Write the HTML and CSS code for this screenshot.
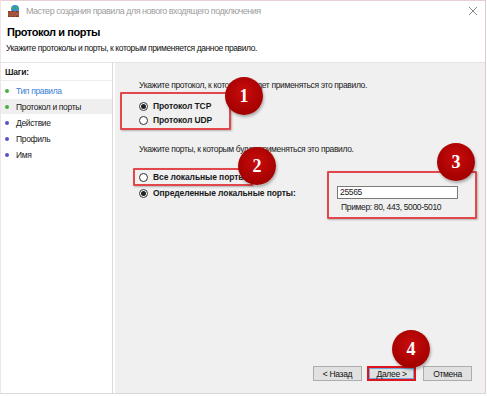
FILE: index.html
```html
<!DOCTYPE html>
<html lang="ru">
<head>
  <meta charset="UTF-8">
  <title>Мастер создания правила для нового входящего подключения</title>
  <link rel="stylesheet" href="styles.css">
</head>
<body>
  <div class="window">
    <div class="titlebar">
      <svg class="app-icon" width="14" height="14" viewBox="0 0 14 14">
        <circle cx="8" cy="5" r="4" fill="#2f8fd8"/>
        <path d="M5 3 Q7 2 8 4 Q7 6 5 5 Z M9 2 Q11 3 11 5 Q10 6 9 4 Z" fill="#4caf3a"/>
        <rect x="1" y="7" width="11" height="6" fill="#8b3a22"/>
        <path d="M1 9 H12 M1 11 H12 M4 7 V9 M8 7 V9 M6 9 V11 M10 9 V11 M4 11 V13 M8 11 V13" stroke="#c9826a" stroke-width="0.6"/>
      </svg>
      <span class="title">Мастер создания правила для нового входящего подключения</span>
      <svg class="close" width="10" height="10" viewBox="0 0 10 10">
        <path d="M1 1 L9 9 M9 1 L1 9" stroke="#8a8a8a" stroke-width="1"/>
      </svg>
    </div>

    <div class="header">
      <h1>Протокол и порты</h1>
      <p>Укажите протоколы и порты, к которым применяется данное правило.</p>
    </div>

    <div class="body">
      <div class="steps">
        <div class="steps-title">Шаги:</div>
        <div class="step step-done"><span class="dot dot-green"></span>Тип правила</div>
        <div class="step step-current"><span class="dot dot-green"></span>Протокол и порты</div>
        <div class="step"><span class="dot"></span>Действие</div>
        <div class="step"><span class="dot"></span>Профиль</div>
        <div class="step"><span class="dot"></span>Имя</div>
      </div>

      <div class="main">
        <div class="content">
          <p class="prompt">Укажите протокол, к которому будет применяться это правило.</p>
          <div class="mark-box box-protocol">
            <label class="radio-row"><span class="radio checked"></span>Протокол TCP</label>
            <label class="radio-row"><span class="radio"></span>Протокол UDP</label>
          </div>

          <p class="prompt prompt-ports">Укажите порты, к которым будет применяться это правило.</p>
          <div class="ports">
            <div class="port-options">
              <div class="mark-box box-all">
                <label class="radio-row"><span class="radio"></span>Все локальные порты</label>
              </div>
              <label class="radio-row row-specific"><span class="radio checked"></span>Определенные локальные порты:</label>
            </div>
            <div class="mark-box box-ports">
              <div class="port-input">25565</div>
              <div class="hint">Пример: 80, 443, 5000-5010</div>
            </div>
          </div>
        </div>

        <div class="buttons">
          <button class="btn">&lt; Назад</button>
          <button class="btn btn-next">Далее &gt;</button>
          <button class="btn btn-cancel">Отмена</button>
        </div>
      </div>
    </div>

    <span class="badge badge-1">1</span>
    <span class="badge badge-2">2</span>
    <span class="badge badge-3">3</span>
    <span class="badge badge-4">4</span>
  </div>
</body>
</html>
```

FILE: styles.css
```css
body {
  margin: 0;
  background: #ffffff;
  font-family: 'Liberation Sans', Arial, sans-serif;
  font-size: 8.5px;
  letter-spacing: -0.35px;
  color: #1a1a1a;
}
.window {
  position: relative;
  width: 486px;
  height: 394px;
  border-top: 1px solid #e8cfd6;
  border-right: 1px solid #e2c7cf;
  border-left: 1px solid #f1e4e8;
  box-sizing: border-box;
  border-bottom: 1px solid #d9d9d9;
  display: flex;
  flex-direction: column;
  background: #ffffff;
  overflow: hidden;
}
.titlebar {
  height: 19px;
  display: flex;
  align-items: center;
  padding-left: 6px;
  padding-right: 6px;
}
.app-icon {
  margin-right: 5px;
}
.title {
  flex: 1;
  color: #a0a0a0;
  font-size: 9px;
  letter-spacing: -0.5px;
}
.close {
  margin-right: 1px;
}
.header {
  height: 42px;
  padding-left: 6px;
}
.header h1 {
  margin: 6px 0 0;
  font-size: 11px;
  letter-spacing: -0.4px;
  font-weight: bold;
  color: #000;
  line-height: 13px;
}
.header p {
  margin: 3px 0 0 -1px;
  line-height: 12px;
  letter-spacing: -0.4px;
  color: #111;
}
.body {
  flex: 1;
  display: flex;
  border-top: 1px solid #e3e3e3;
}
.steps {
  width: 111px;
  border-right: 1px solid #dadada;
  background: #fff;
  margin-right: 2px;
}
.steps-title {
  font-weight: bold;
  letter-spacing: -0.2px;
  padding: 3px 0 2px 4px;
  line-height: 12px;
  border-bottom: 1px solid #eeeeee;
  margin-bottom: 2px;
}
.step {
  display: flex;
  align-items: center;
  height: 15px;
  padding-left: 4px;
  margin-bottom: 1px;
}
.step-done {
  color: #3c7fd6;
}
.step-current {
  background: #efefef;
}
.dot {
  width: 4px;
  height: 4px;
  border-radius: 50%;
  background: #5a52c7;
  margin-right: 7px;
}
.dot-green {
  background: #45b23e;
}
.main {
  flex: 1;
  background: #f0f0f0;
  display: flex;
  flex-direction: column;
}
.content {
  flex: 1;
  padding-left: 5px;
}
.prompt {
  margin: 16px 0 0 19px;
  line-height: 12px;
}
.prompt-ports {
  margin-top: 13px;
}
.mark-box {
  border: 2px solid #e2474b;
  box-shadow: 1px 1px 2px rgba(0, 0, 0, 0.25);
  border-radius: 1px;
}
.box-protocol {
  width: 111px;
  margin-top: 1px;
  padding: 5px 0 1px 17px;
  box-sizing: border-box;
}
.radio-row {
  display: flex;
  align-items: center;
  height: 14px;
  font-weight: bold;
  letter-spacing: -0.1px;
  white-space: nowrap;
}
.radio {
  flex: none;
  width: 9px;
  height: 9px;
  border: 1px solid #333;
  border-radius: 50%;
  background: #fff;
  box-sizing: border-box;
  margin-right: 5px;
  display: flex;
  align-items: center;
  justify-content: center;
}
.radio.checked::after {
  content: "";
  width: 5px;
  height: 5px;
  border-radius: 50%;
  background: #222;
}
.ports {
  display: flex;
  justify-content: space-between;
  margin: 13px 8px 0 13px;
}
.box-all {
  width: 120px;
  box-sizing: border-box;
  padding-left: 4px;
}
.row-specific {
  padding-left: 6px;
}
.box-ports {
  width: 150px;
  height: 48px;
  box-sizing: border-box;
  margin-top: 3px;
  padding: 13px 0 0 8px;
}
.port-input {
  width: 121px;
  height: 13px;
  box-sizing: border-box;
  border: 1px solid #7a7a7a;
  background: #fff;
  line-height: 11px;
  padding-left: 2px;
}
.hint {
  margin: 2px 0 0 4px;
  line-height: 12px;
}
.buttons {
  display: flex;
  justify-content: flex-end;
  padding: 0 13px 12px 0;
}
.btn {
  width: 49px;
  height: 15px;
  margin-left: 5px;
  border: 1px solid #adadad;
  background: #e1e1e1;
  font-family: inherit;
  font-size: 8.5px;
  letter-spacing: -0.3px;
  color: #111;
  padding: 0;
  box-sizing: border-box;
}
.btn-next {
  border: 2px solid #e0141b;
  box-shadow: inset 0 0 0 1px #6fa6dc;
}
.btn-cancel {
  margin-left: 7px;
}
.badge {
  position: absolute;
  width: 38px;
  height: 38px;
  border-radius: 50%;
  background: radial-gradient(circle at 50% 40%, #c80d0d, #a50000 70%, #8e0000);
  box-shadow: 1px 2px 3px rgba(0, 0, 0, 0.3);
  color: #fff;
  font-family: 'Liberation Serif', 'Times New Roman', serif;
  font-weight: bold;
  font-size: 18px;
  letter-spacing: 0;
  display: flex;
  align-items: center;
  justify-content: center;
}
.badge-1 { left: 224px; top: 76px; }
.badge-2 { left: 237px; top: 146px; }
.badge-3 { left: 436px; top: 142px; }
.badge-4 { left: 391px; top: 329px; }
```
